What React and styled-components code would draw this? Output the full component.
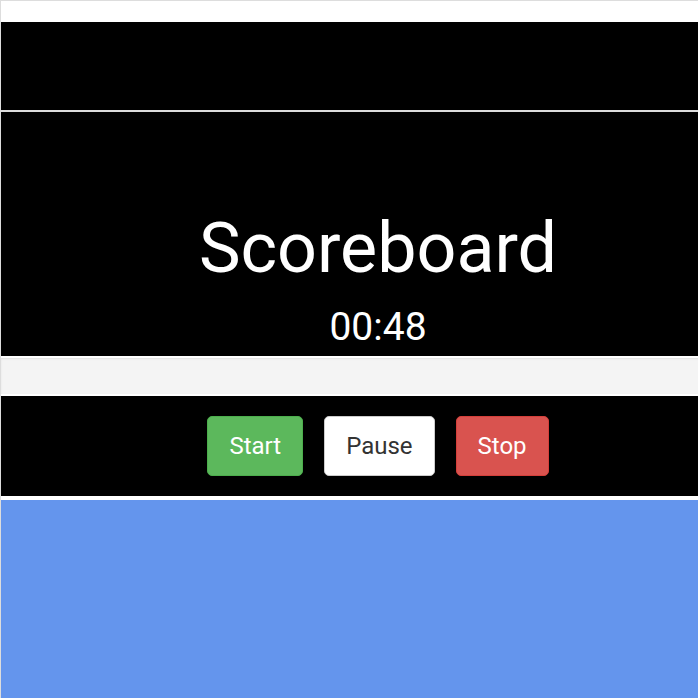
import React from "react";
import styled, { createGlobalStyle } from "styled-components";

const GlobalStyle = createGlobalStyle`
  html, body {
    margin: 0;
    padding: 0;
    overflow: hidden;
    background: #ffffff;
    font-family: Roboto, "Liberation Sans", sans-serif;
  }
`;

// the page is wider than the window, so its right side is cut off
const Frame = styled.div`
  width: 754px;
  min-height: 697px;
  border-top: 1px solid #dddddd;
  border-left: 1px solid #dddddd;
  padding-top: 21px;
  display: flex;
  flex-direction: column;
`;

const TopBar = styled.header`
  height: 88px;
  background: #000;
  border-bottom: 2px solid #dddddd;
`;

const Board = styled.section`
  height: 244px;
  background: #000;
  color: #fff;
  display: flex;
  flex-direction: column;
  align-items: center;
  justify-content: flex-end;
  padding-bottom: 6px;
  box-sizing: border-box;
`;

const Title = styled.h1`
  font-size: 70px;
  font-weight: 400;
  line-height: 1;
  margin: 0 0 22px 0;
`;

const Timer = styled.div`
  font-size: 39px;
  line-height: 45px;
`;

const Strip = styled.div`
  height: 36px;
  margin: 2px 0;
  background: #f4f4f4;
  box-shadow: inset 0 1px 2px rgba(0, 0, 0, 0.08);
`;

const Controls = styled.div`
  height: 100px;
  box-sizing: border-box;
  padding-top: 20px;
  background: #000;
  display: flex;
  justify-content: center;
  align-items: flex-start;
  gap: 21px;
`;

const variants = {
  success: { bg: "#5cb85c", border: "#4cae4c", color: "#fff" },
  plain: { bg: "#fff", border: "#cccccc", color: "#333" },
  danger: { bg: "#d9534f", border: "#d43f3a", color: "#fff" },
};

const Button = styled.button`
  font-family: Roboto, "Liberation Sans", sans-serif;
  font-size: 24px;
  line-height: 32px;
  padding: 13px 21px;
  border-radius: 5px;
  border: 1px solid ${(p) => variants[p.$kind].border};
  background: ${(p) => variants[p.$kind].bg};
  color: ${(p) => variants[p.$kind].color};
  cursor: pointer;
`;

const Field = styled.div`
  flex: 1;
  margin-top: 4px;
  background: #6495ed;
`;

export default function App() {
  return (
    <>
      <GlobalStyle />
      <Frame>
        <TopBar />
        <Board>
          <Title>Scoreboard</Title>
          <Timer>00:48</Timer>
        </Board>
        <Strip />
        <Controls>
          <Button $kind="success">Start</Button>
          <Button $kind="plain">Pause</Button>
          <Button $kind="danger">Stop</Button>
        </Controls>
        <Field />
      </Frame>
    </>
  );
}
